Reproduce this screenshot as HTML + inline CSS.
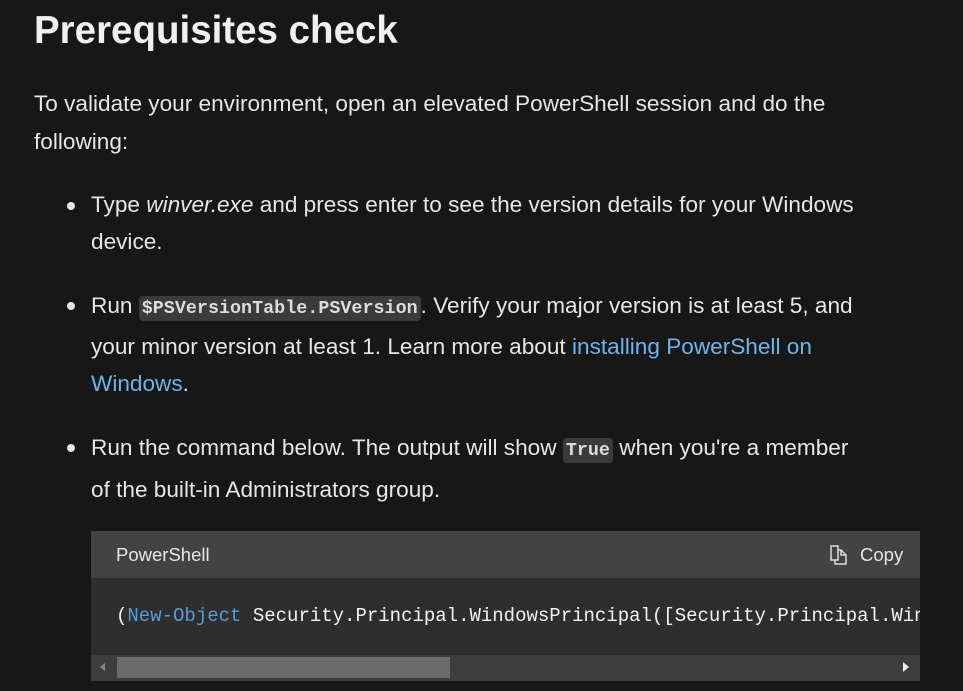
<!DOCTYPE html>
<html><head><style>
body{margin:0;width:963px;height:691px;background:#171717;overflow:hidden;position:relative;font-family:"Liberation Sans",sans-serif;color:#e6e6e6}
.l{position:absolute;white-space:nowrap;font-size:22.6px;line-height:30px}
h1{position:absolute;left:34px;top:6px;margin:0;font-size:38.5px;font-weight:bold;line-height:50px;color:#f0f0f0}
.d{position:absolute;left:67px;width:8px;height:8px;border-radius:50%;background:#e6e6e6}
code{font-family:"Liberation Mono",monospace;font-size:18.4px;font-weight:bold;background:#3b3b3b;border-radius:4px;padding:2px 3px;color:#dcdcdc}
a{color:#6cb4ea;text-decoration:none}
.cb{position:absolute;left:91px;top:531px;width:829px;height:150px;background:#2e2e2e}
.hd{position:absolute;left:0;top:0;width:829px;height:47px;background:#434343}
.sb{position:absolute;left:0;top:124px;width:829px;height:26px;background:#3d3d3d}
</style></head><body>
<h1>Prerequisites check</h1>
<div class="l" style="left:34px;top:89px">To validate your environment, open an elevated PowerShell session and do the</div>
<div class="l" style="left:34px;top:127px">following:</div>
<div class="d" style="top:202px"></div>
<div class="l" style="left:91px;top:190px">Type <i>winver.exe</i> and press enter to see the version details for your Windows</div>
<div class="l" style="left:91px;top:227px">device.</div>
<div class="d" style="top:302px"></div>
<div class="l" style="left:91px;top:291px">Run <code>$PSVersionTable.PSVersion</code>. Verify your major version is at least 5, and</div>
<div class="l" style="left:91px;top:332px">your minor version at least 1. Learn more about <a>installing PowerShell on</a></div>
<div class="l" style="left:91px;top:369px"><a>Windows</a>.</div>
<div class="d" style="top:444px"></div>
<div class="l" style="left:91px;top:433px">Run the command below. The output will show <code>True</code> when you're a member</div>
<div class="l" style="left:91px;top:475px">of the built-in Administrators group.</div>
<div class="cb">
 <div class="hd">
  <div style="position:absolute;left:25px;top:13px;font-size:18.5px">PowerShell</div>
  <svg style="position:absolute;left:738px;top:13px" width="20" height="22" viewBox="0 0 20 22" fill="none" stroke="#ddd" stroke-width="1.5"><path d="M2 2h7v14H2z"/><path d="M9 6l3 0 5 5v9H6v-4"/><path d="M12 6v5h5"/></svg>
  <div style="position:absolute;left:769px;top:13px;font-size:18.5px">Copy</div>
 </div>
 <div style="position:absolute;left:25px;top:74px;font-family:'Liberation Mono',monospace;font-size:19px;white-space:nowrap;color:#f2f2f2;width:804px;overflow:hidden">(<span style="color:#569cd6">New-Object</span> Security.Principal.WindowsPrincipal([Security.Principal.WindowsIdentity]::GetCurrent())).IsInRole</div>
 <div class="sb">
  <div style="position:absolute;left:26px;top:2px;width:333px;height:21px;background:#6b6b6b"></div>
  <div style="position:absolute;left:9px;top:8px;border:4px solid transparent;border-right:5px solid #888;border-left:0"></div>
  <div style="position:absolute;left:812px;top:7px;border:5px solid transparent;border-left:6px solid #eee;border-right:0"></div>
 </div>
</div>
</body></html>
